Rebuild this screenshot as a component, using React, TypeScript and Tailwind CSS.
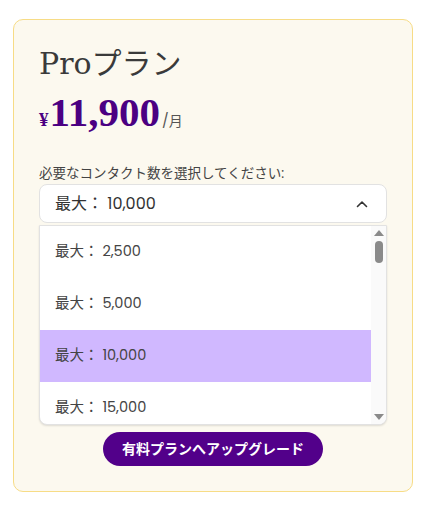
import React from "react";

const options = [2500, 5000, 10000, 15000];

const sans = "font-['Poppins','Inter','Noto_Sans_CJK_JP',sans-serif]";

export default function App() {
  const selected = 10000;
  return (
    <div className="min-h-[517px] w-[446px] bg-white pt-[19px] pl-[13px]">
      <div className="w-[400px] rounded-[10px] border border-[#f7dc86] bg-[#fcf9ef] px-[25px] pt-[24px] pb-[25px]">
        {/* Title */}
        <h1 className="font-['DejaVu_Serif','Noto_Sans_CJK_JP',serif] text-[30px] leading-[40px] text-[#3a3a3a]">
          Proプラン
        </h1>

        {/* Price */}
        <div className="mt-[4px] flex items-baseline font-['Liberation_Serif',serif] text-[#4b0082]">
          <span className="text-[19px] font-bold">¥</span>
          <span className="ml-[1px] text-[41px] leading-[48px] font-bold">11,900</span>
          <span className={`${sans} ml-[2px] text-[14px] text-[#555]`}>/月</span>
        </div>

        {/* Select */}
        <div className={`${sans} mt-[29px]`}>
          <label className="block text-[13.5px] leading-[18px] text-[#444]">
            必要なコンタクト数を選択してください:
          </label>
          <button className="mt-[1px] flex h-[39px] w-full items-center justify-between rounded-[8px] border border-[#e2e2e2] bg-white pl-[15px] pr-[18px] text-[16px] text-[#333]">
            <span>最大： 10,000</span>
            <svg width="12" height="8" viewBox="0 0 12 8" fill="none">
              <path d="M1.5 6.5L6 2l4.5 4.5" stroke="#333" strokeWidth="1.6" strokeLinecap="round" strokeLinejoin="round" />
            </svg>
          </button>
          <div className="mt-[2px] flex h-[200px] overflow-hidden rounded-b-[8px] border border-[#e2e2e2] bg-white shadow-[0_1px_2px_rgba(0,0,0,0.12)]">
            <ul className="flex-1">
              {options.map((n) => (
                <li
                  key={n}
                  className={`flex h-[52px] items-center pl-[15px] text-[14.5px] text-[#444] ${
                    n === selected ? "bg-[#d0b8ff]" : ""
                  }`}
                >
                  最大： {n.toLocaleString("en-US")}
                </li>
              ))}
            </ul>
            {/* scrollbar */}
            <div className="flex w-[15px] flex-col items-center bg-[#fafafa] py-[4px]">
              <svg width="10" height="6" viewBox="0 0 10 6">
                <path d="M0 6L5 0l5 6z" fill="#8a8a8a" />
              </svg>
              <div className="mt-[5px] h-[22px] w-[8px] rounded-full bg-[#8a8a8a]" />
              <div className="flex-1" />
              <svg width="10" height="6" viewBox="0 0 10 6">
                <path d="M0 0h10L5 6z" fill="#8a8a8a" />
              </svg>
            </div>
          </div>
        </div>

        {/* Upgrade */}
        <div className="mt-[7px] flex justify-center">
          <button className={`${sans} h-[34px] rounded-full bg-[#52008a] px-[19px] text-[14px] font-bold text-white`}>
            有料プランへアップグレード
          </button>
        </div>
      </div>
    </div>
  );
}
